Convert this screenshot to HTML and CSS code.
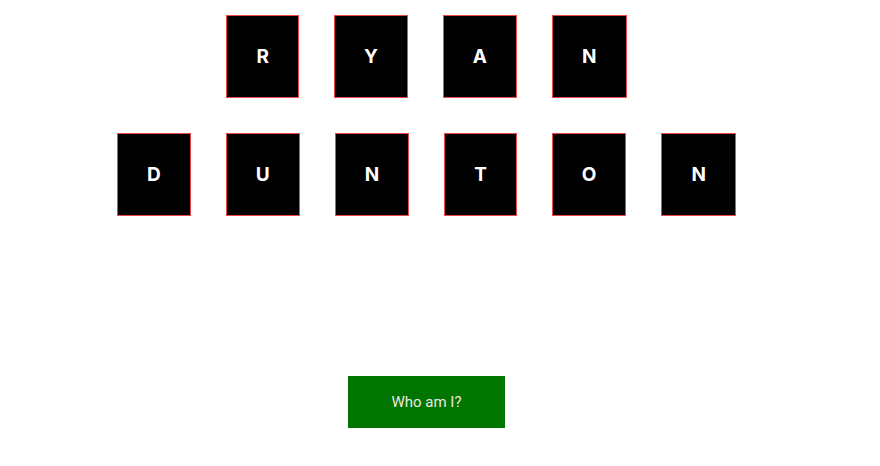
FILE: index.html
```html
<!DOCTYPE html>
<html lang="en">
<head>
<meta charset="utf-8">
<title>Ryan Dunton</title>
<link rel="stylesheet" href="styles.css">
</head>
<body>
<main class="page">
  <div class="name">
    <div class="row"><span class="tile">R</span><span class="tile">Y</span><span class="tile">A</span><span class="tile">N</span></div>
    <div class="row"><span class="tile">D</span><span class="tile">U</span><span class="tile">N</span><span class="tile">T</span><span class="tile">O</span><span class="tile">N</span></div>
  </div>
  <button class="about" type="button">Who am I?</button>
</main>
</body>
</html>
```
FILE: styles.css
```css
* { box-sizing: border-box; }
body {
  margin: 0;
  background: #fff;
  font-family: Roboto, "Liberation Sans", sans-serif;
}
.page {
  display: flex;
  flex-direction: column;
  align-items: center;
  gap: 160px;
  padding: 15px 27px 38px 0;
}
.name {
  display: flex;
  flex-direction: column;
  gap: 35px;
}
.row {
  display: flex;
  justify-content: center;
  gap: 35px;
}
.tile {
  padding: 29px 29px 28px;
  border: 1px solid #f04848;
  background: #000;
  color: #fff;
  font-family: Inter, "Liberation Sans", sans-serif;
  font-size: 19px;
  font-weight: 700;
  line-height: 24px;
}
.about {
  padding: 14px 43px;
  border: 0;
  background: #007500;
  color: #efe6e0;
  font-family: inherit;
  font-size: 15px;
  line-height: 24px;
}
```
